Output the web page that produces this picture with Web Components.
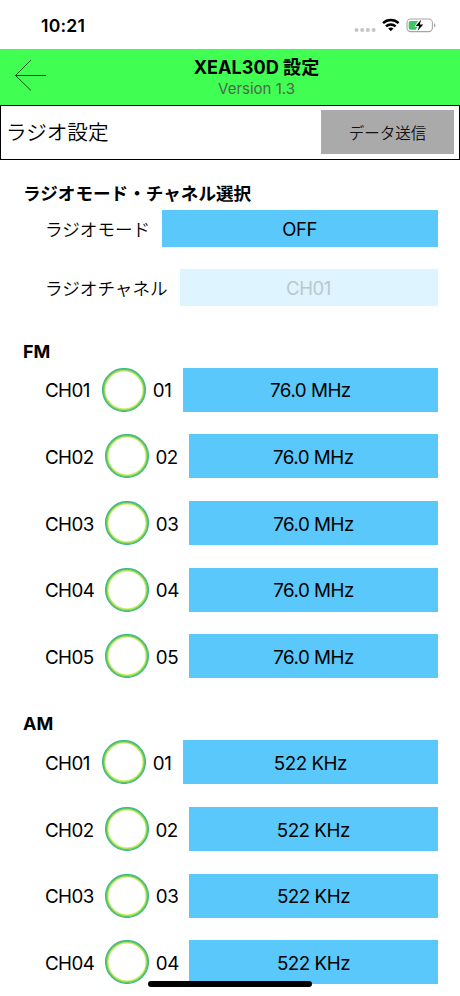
<!DOCTYPE html>
<html lang="ja">
<head>
<meta charset="UTF-8">
<meta name="viewport" content="width=device-width, initial-scale=1">
<title>XEAL30D 設定</title>
<style>
  html, body {
    margin: 0;
    height: 100%;
    overflow: hidden;
    background: #fff;
  }
</style>
</head>
<body>
<radio-settings-app></radio-settings-app>

<script>
class StatusBar extends HTMLElement {
  constructor() {
    super();
    this.attachShadow({ mode: 'open' });
  }

  connectedCallback() {
    this.shadowRoot.innerHTML = `
      <style>
        :host {
          display: flex;
          justify-content: space-between;
          align-items: center;
          box-sizing: border-box;
          height: 49px;
          padding: 2px 24px 0 41px;
        }

        time {
          font-size: 17.6px;
          font-weight: 600;
          line-height: 20px;
          letter-spacing: 0.2px;
        }

        svg {
          display: block;
        }
      </style>

      <time>10:21</time>
      <svg width="83" height="20" viewBox="0 0 83 20">
        <g fill="#c4c4c4">
          <circle cx="3.5" cy="14" r="2"/><circle cx="9.2" cy="14" r="2"/>
          <circle cx="14.9" cy="14" r="2"/><circle cx="20.6" cy="14" r="2"/>
        </g>
        <g fill="none" stroke="#000" stroke-width="2.5">
          <path d="M30 7.2a11.4 11.4 0 0 1 15.6 0"/>
          <path d="M33 10.4a7 7 0 0 1 9.6 0"/>
        </g>
        <path d="M35.2 12.6a4 4 0 0 1 5.2 0L37.8 15.3z"/>
        <rect x="54" y="3" width="25.4" height="12.6" rx="3.8" fill="none" stroke="#a5a5a5" stroke-width="1.1"/>
        <path d="M57.5 4.9H65L61.8 10.2H64.5L63 13.8H57.5A1.8 1.8 0 0 1 55.7 12V6.7A1.8 1.8 0 0 1 57.5 4.9z" fill="#41c363"/>
        <path d="M81 7.2v4.2q1.4-.7 1.4-2.1T81 7.2z" fill="#a5a5a5"/>
        <path d="M68.1 3.8L62.7 10h3.4l-1.4 4.8L70.3 8.400h-3.500z" stroke="#fff" stroke-width="1.2" paint-order="stroke"/>
      </svg>
    `;
  }
}

class NavHeader extends HTMLElement {
  constructor() {
    super();
    this.attachShadow({ mode: 'open' });
  }

  connectedCallback() {
    this.shadowRoot.innerHTML = `
      <style>
        :host {
          display: grid;
          grid-template-columns: 52px 1fr;
          align-items: start;
          height: 56px;
          background: #40ff52;
        }

        svg {
          display: block;
          margin: 10px 0 0 14px;
        }

        .titles {
          text-align: center;
        }

        h1 {
          margin: 6px 0 0 1px;
          font-size: 18.1px;
          font-weight: 700;
          line-height: 24px;
          white-space: nowrap;
        }

        p {
          margin: 0 0 0 1px;
          font-size: 15px;
          line-height: 20px;
          color: #4d6650;
        }
      </style>

      <svg width="34" height="34" viewBox="0 0 34 34" fill="none" stroke="#063d0b" stroke-width="0.9">
        <path d="M17 1L1.500 16.500L17 31.500M1.500 16.500H32"/>
      </svg>
      <div class="titles">
        <h1><slot></slot></h1>
        <p><slot name="version"></slot></p>
      </div>
    `;
  }
}

class SettingToolbar extends HTMLElement {
  constructor() {
    super();
    this.attachShadow({ mode: 'open' });
  }

  connectedCallback() {
    this.shadowRoot.innerHTML = `
      <style>
        :host {
          display: flex;
          justify-content: space-between;
          align-items: center;
          box-sizing: border-box;
          height: 55px;
          padding: 0 5px;
          border: 1px solid #000;
        }

        h2 {
          margin: 0;
          font-size: 20.6px;
          font-weight: 350;
          line-height: 28px;
        }

        button {
          width: 133px;
          height: 44px;
          margin-top: -1px;
          padding: 0 0 1px;
          border: none;
          background: #aaa;
          color: #111;
          font: inherit;
          font-size: 15.5px;
          font-weight: 350;
        }
      </style>

      <h2><slot></slot></h2>
      <button type="button"><slot name="action"></slot></button>
    `;
  }
}

class SettingSelect extends HTMLElement {
  constructor() {
    super();
    this.attachShadow({ mode: 'open' });
  }

  connectedCallback() {
    const disabled = this.hasAttribute('disabled');
    this.shadowRoot.innerHTML = `
      <style>
        :host {
          display: grid;
          grid-template-columns: var(--label-width) 1fr;
          height: 36.5px;
          align-items: center;
          font-size: 17.6px;
        }

        button {
          height: 100%;
          padding: 0;
          border: none;
          background: #5ac8fa;
          color: #000;
          font: inherit;
          font-size: 18.5px;
          letter-spacing: -0.4px;
        }

        button:disabled {
          background: #def4fe;
          color: #bac8ce;
        }

        span {
          font-weight: 350;
          white-space: nowrap;
        }
      </style>

      <span><slot></slot></span>
      <button type="button" ${disabled ? 'disabled' : ''}>${this.getAttribute('value')}</button>
    `;
  }
}

class ChannelRow extends HTMLElement {
  constructor() {
    super();
    this.attachShadow({ mode: 'open' });
  }

  connectedCallback() {
    const no = this.getAttribute('no');
    this.shadowRoot.innerHTML = `
      <style>
        :host {
          display: grid;
          grid-template-columns: var(--name-width) 44px var(--number-width) 1fr;
          height: 44px;
          align-items: center;
          font-size: 18.8px;
        }

        .name {
          padding-top: 2px;
          letter-spacing: -0.6px;
        }

        .number {
          padding: 2px 0 0 6.5px;
          letter-spacing: -0.5px;
        }

        svg {
          display: block;
        }

        button {
          height: 100%;
          padding: 2px 0 0;
          border: none;
          background: #5ac8fa;
          color: #000;
          font: inherit;
          letter-spacing: -0.5px;
        }
      </style>

      <span class="name">CH${no}</span>
      <svg width="44" height="44" viewBox="0 0 44 44" fill="none">
        <circle cx="22" cy="22" r="19.700" stroke="#c6ec62" stroke-width="2.400"/>
        <circle cx="22" cy="22" r="20.500" stroke="#75c95b" stroke-width="1.700"/>
        <circle cx="22" cy="22" r="21.400" stroke="#3fb98a" stroke-width="1.300"/>
      </svg>
      <span class="number">${no}</span>
      <button type="button">${this.getAttribute('value')}</button>
    `;
  }
}

class ChannelGroup extends HTMLElement {
  constructor() {
    super();
    this.attachShadow({ mode: 'open' });
    // 番号の字幅に合わせた列幅
    this.columns = {
      '01': [57.3, 37],
      '02': [60, 40],
      '03': [60.3, 40.2],
      '04': [60.3, 40.2],
      '05': [60.3, 40.2]
    };
  }

  connectedCallback() {
    const rows = Object.entries(this.columns).slice(0, Number(this.getAttribute('count')));
    this.shadowRoot.innerHTML = `
      <style>
        :host {
          display: block;
        }

        h3 {
          margin: 0 0 4px;
          font-size: 18px;
          font-weight: 700;
          line-height: 24px;
        }

        .rows {
          display: flex;
          flex-direction: column;
          gap: 22.65px;
          padding-left: 22px;
        }
      </style>

      <h3>${this.getAttribute('band')}</h3>
      <div class="rows">
        ${rows.map(([no, [name, number]]) => `
          <channel-row no="${no}" value="${this.getAttribute('value')}"
            style="--name-width: ${name}px; --number-width: ${number}px"></channel-row>
        `).join('')}
      </div>
    `;
  }
}

class RadioSettingsApp extends HTMLElement {
  constructor() {
    super();
    this.attachShadow({ mode: 'open' });
  }

  connectedCallback() {
    this.shadowRoot.innerHTML = `
      <style>
        :host {
          display: block;
          position: relative;
          height: 996px;
          overflow: hidden;
          color: #000;
          font-family: Inter, "Noto Sans CJK JP", sans-serif;
        }

        main {
          padding: 22.3px 22.5px 0 23px;
        }

        h3 {
          margin: 0 0 4px;
          font-size: 17.6px;
          font-weight: 700;
          line-height: 24px;
        }

        .selects {
          display: flex;
          flex-direction: column;
          gap: 22.5px;
          padding-left: 22px;
          margin-bottom: 34px;
        }

        channel-group + channel-group {
          margin-top: 34px;
        }

        .home-indicator {
          position: absolute;
          left: 148px;
          bottom: 9px;
          width: 164px;
          height: 6px;
          border-radius: 3px;
          background: #000;
        }
      </style>

      <status-bar></status-bar>
      <nav-header>XEAL30D 設定<span slot="version">Version 1.3</span></nav-header>
      <setting-toolbar>ラジオ設定<span slot="action">データ送信</span></setting-toolbar>
      <main>
        <h3>ラジオモード・チャネル選択</h3>
        <div class="selects">
          <setting-select value="OFF" style="--label-width: 117px">ラジオモード</setting-select>
          <setting-select value="CH01" disabled style="--label-width: 134.5px">ラジオチャネル</setting-select>
        </div>
        <channel-group band="FM" value="76.0 MHz" count="5"></channel-group>
        <channel-group band="AM" value="522 KHz" count="4"></channel-group>
      </main>
      <div class="home-indicator"></div>
    `;
  }
}

customElements.define('status-bar', StatusBar);
customElements.define('nav-header', NavHeader);
customElements.define('setting-toolbar', SettingToolbar);
customElements.define('setting-select', SettingSelect);
customElements.define('channel-row', ChannelRow);
customElements.define('channel-group', ChannelGroup);
customElements.define('radio-settings-app', RadioSettingsApp);
</script>
</body>
</html>
